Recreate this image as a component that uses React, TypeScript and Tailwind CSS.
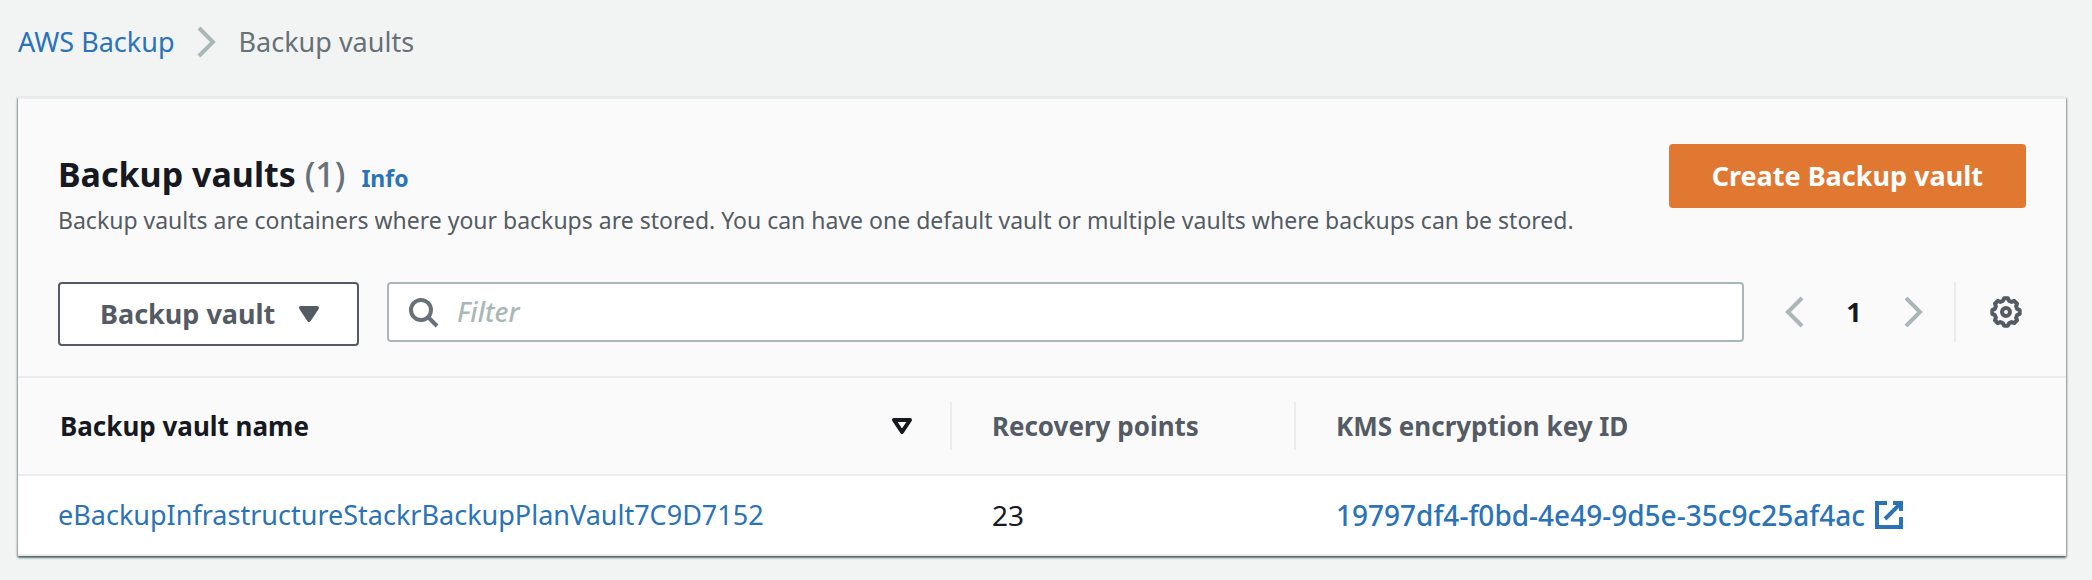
import type { ReactNode } from "react";

function Icon({ className = "", children }: { className?: string; children: ReactNode }) {
  return (
    <svg viewBox="0 0 16 16" aria-hidden="true" fill="none" stroke="currentColor" strokeWidth="2" className={`size-8 shrink-0 ${className}`}>
      {children}
    </svg>
  );
}

const gearPath = (() => {
  const points: string[] = [];
  const teeth = 8;
  for (let i = 0; i < teeth; i++) {
    const center = (i * 2 * Math.PI) / teeth;
    const corners: [number, number][] = [
      [-0.27, 5.8],
      [-0.14, 6.9],
      [0.14, 6.9],
      [0.27, 5.8],
    ];
    for (const [offset, radius] of corners) {
      const x = 8 + radius * Math.sin(center + offset);
      const y = 8 - radius * Math.cos(center + offset);
      points.push(`${x.toFixed(2)} ${y.toFixed(2)}`);
    }
  }
  return `M${points.join("L")}Z`;
})();

export default function App() {
  return (
    <div className="min-h-screen bg-[#f2f4f3] px-[18px] font-['Noto_Sans',sans-serif] font-[430] text-[#16191f]">
      <nav aria-label="Breadcrumb" className="flex h-[97px] items-start pt-6">
        <ol className="flex items-center text-[27px] leading-9">
          <li><a href="#" className="text-[#2a73b8]">AWS Backup</a></li>
          <li className="flex items-center">
            <Icon className="mx-4 text-[#aab7b8]"><path d="M4 1l7 7-7 7" /></Icon>
            <span aria-current="page" className="text-[#687078]">Backup vaults</span>
          </li>
        </ol>
      </nav>

      <main className="mr-2 border-t-2 border-[#eaeded] bg-[#fafafa] shadow-[0_2px_2px_0_rgba(0,28,36,0.45),1px_1px_2px_0_rgba(0,28,36,0.3),-1px_1px_2px_0_rgba(0,28,36,0.3)]">
        <header className="flex items-start justify-between px-10 pt-[45px]">
          <div className="pt-2">
            <div className="flex items-baseline">
              <h1 className="text-[34px] leading-[44px] font-bold">
                Backup vaults <span className="font-medium text-[#687078]">(1)</span>
              </h1>
              <a href="#" className="ml-4 text-[23px] font-bold text-[#2a73b8]">Info</a>
            </div>
            <p className="mt-1.5 text-[23px] leading-9 text-[#545b64]">
              Backup vaults are containers where your backups are stored. You can have one default vault or multiple vaults where backups can be stored.
            </p>
          </div>
          <button type="button" className="h-16 rounded-sm bg-[#e07832] px-[43px] text-[27px] font-bold whitespace-nowrap text-white">
            Create Backup vault
          </button>
        </header>

        <div className="flex items-start px-10 pt-11 pb-[30px]">
          <button type="button" className="flex h-16 w-[301px] shrink-0 items-center justify-between rounded-sm border-2 border-[#545b64] bg-white pr-8 pl-10 text-[27px] font-bold text-[#545b64]">
            Backup vault
            <Icon className="fill-current"><path d="M4 5h8l-4 6z" strokeLinejoin="round" /></Icon>
          </button>
          <div className="ml-7 flex h-[60px] flex-1 items-center rounded-sm border-2 border-[#aab7b8] bg-white pl-[18px]">
            <Icon className="text-[#687078]"><circle cx="7" cy="7" r="5" /><path d="M15 15l-4.5-4.5" /></Icon>
            <input type="text" aria-label="Filter" placeholder="Filter" className="ml-[18px] flex-1 bg-transparent text-[27px] font-medium outline-none placeholder:text-[#aab7b8] placeholder:italic" />
          </div>
          <div className="mr-1 ml-[34px] flex h-[60px] items-center">
            <button type="button" aria-label="Previous page"><Icon className="text-[#aab7b8]"><path d="M12 1L5 8l7 7" /></Icon></button>
            <button type="button" aria-current="page" className="w-[88px] text-[27px] font-bold">1</button>
            <button type="button" aria-label="Next page"><Icon className="text-[#aab7b8]"><path d="M4 1l7 7-7 7" /></Icon></button>
            <div className="ml-6 h-[60px] border-l-2 border-[#eaeded]" />
            <button type="button" aria-label="Preferences" className="ml-[34px]">
              <Icon className="text-[#545b64]"><path d={gearPath} strokeLinejoin="round" /><circle cx="8" cy="8" r="2" /></Icon>
            </button>
          </div>
        </div>

        <table className="w-full table-fixed border-collapse text-left whitespace-nowrap">
          <colgroup>
            <col className="w-[45.6%]" />
            <col className="w-[16.8%]" />
            <col />
          </colgroup>
          <thead className="border-y-2 border-[#eaeded] text-[26px]">
            <tr className="h-[98px] text-[#545b64]">
              <th scope="col" aria-sort="ascending" className="p-0 text-[#16191f]">
                <div className="flex h-12 items-center justify-between border-r-2 border-[#eaeded] pr-8 pl-[42px]">
                  Backup vault name
                  <Icon><path d="M4 5h8l-4 6z" strokeLinejoin="round" /></Icon>
                </div>
              </th>
              <th scope="col" className="p-0">
                <div className="flex h-12 items-center border-r-2 border-[#eaeded] pl-10">Recovery points</div>
              </th>
              <th scope="col" className="p-0 pl-10">KMS encryption key ID</th>
            </tr>
          </thead>
          <tbody className="border-b-2 border-[#eaeded] bg-white">
            <tr className="h-20">
              <td className="p-0 pl-10 text-[27px]"><a href="#" className="text-[#2a73b8]">eBackupInfrastructureStackrBackupPlanVault7C9D7152</a></td>
              <td className="p-0 pl-10 text-[28px]">23</td>
              <td className="p-0 pl-10 text-[28px] font-medium">
                <a href="#" className="flex items-center gap-2 text-[#2a73b8]">
                  19797df4-f0bd-4e49-9d5e-35c9c25af4ac
                  <Icon><path d="M10 2h4v4M6 10l8-8M14 9.05V14H2V2h5" /></Icon>
                </a>
              </td>
            </tr>
          </tbody>
        </table>
      </main>
    </div>
  );
}
